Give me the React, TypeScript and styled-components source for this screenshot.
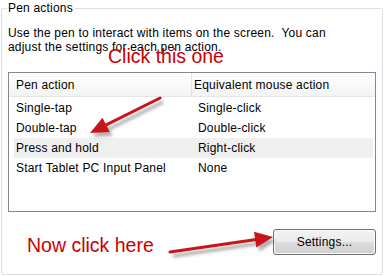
import React from 'react';
import styled, { createGlobalStyle } from 'styled-components';

const GlobalStyle = createGlobalStyle`
  body {
    margin: 0;
    background: #fff;
    font-family: "Liberation Sans", Arial, sans-serif;
  }
`;

const Page = styled.div`
  position: relative;
  width: 385px;
  height: 276px;
  padding: 8px 0 0 1px;
  box-sizing: border-box;
  letter-spacing: 0.2px;
`;

const GroupBox = styled.section`
  position: relative;
  width: 382px;
  height: 267px;
  box-sizing: border-box;
  border: 1px solid #d5dfe5;
  border-radius: 3px;
  padding: 17px 6px 0 6px;
  display: flex;
  flex-direction: column;
`;

const Legend = styled.div`
  position: absolute;
  top: -8px;
  left: 5px;
  padding: 0 2px 0 1px;
  background: #fff;
  font-size: 12px;
  line-height: 14px;
  color: #000;
`;

const Description = styled.p`
  margin: 0;
  font-size: 12px;
  line-height: 14px;
  color: #000;
  white-space: pre-wrap;
`;

const ListView = styled.div`
  margin-top: 18px;
  width: 368px;
  height: 140px;
  box-sizing: border-box;
  border: 1px solid #828790;
  background: #fff;
`;

const HeaderRow = styled.div`
  display: grid;
  grid-template-columns: 182px 1fr;
  height: 24px;
  box-sizing: border-box;
  border-bottom: 1px solid #e5e5e5;
  background: linear-gradient(#ffffff, #f3f4f6);
  margin-bottom: 1px;
`;

const HeaderCell = styled.div<{ $divider?: boolean }>`
  display: flex;
  align-items: center;
  padding-left: ${p => (p.$divider ? '2px' : '7px')};
  border-left: ${p => (p.$divider ? '1px solid #e0e3e8' : 'none')};
  font-size: 12px;
  color: #000;
`;

const Row = styled.div<{ $hot?: boolean }>`
  display: grid;
  grid-template-columns: 177px 1fr;
  height: 20px;
  margin: 0 2px 0 5px;
  background: ${p => (p.$hot ? '#efefef' : 'transparent')};
`;

const Cell = styled.div<{ $second?: boolean }>`
  display: flex;
  align-items: center;
  padding-left: ${p => (p.$second ? '7px' : '2px')};
  font-size: 12px;
  color: #000;
  white-space: nowrap;
`;

const Footer = styled.div`
  display: flex;
  justify-content: flex-end;
  padding: 17px 0 0 0;
`;

const Button = styled.button`
  width: 103px;
  height: 26px;
  border: 1px solid #707070;
  border-radius: 3px;
  background: linear-gradient(#f2f2f2 0%, #ebebeb 49%, #dddddd 50%, #cfcfcf 100%);
  box-shadow: inset 0 0 0 1px #fcfcfc;
  font-family: "Liberation Sans", Arial, sans-serif;
  font-size: 12px;
  letter-spacing: 0.2px;
  color: #000;
  padding: 0;
`;

const Callout = styled.div<{ $x: number; $y: number }>`
  position: absolute;
  left: ${p => p.$x}px;
  top: ${p => p.$y}px;
  font-family: "Liberation Sans", Arial, sans-serif;
  font-size: 19.5px;
  line-height: 22px;
  letter-spacing: 0;
  color: #cc0000;
  white-space: nowrap;
`;

const Overlay = styled.svg`
  position: absolute;
  left: 0;
  top: 0;
  pointer-events: none;
`;

const rows = [
  { pen: 'Single-tap', mouse: 'Single-click' },
  { pen: 'Double-tap', mouse: 'Double-click' },
  { pen: 'Press and hold', mouse: 'Right-click' },
  { pen: 'Start Tablet PC Input Panel', mouse: 'None' },
];

// arrow from tail to tip, drawn as shaft + triangular head
const Arrow: React.FC<{ x1: number; y1: number; x2: number; y2: number; head: number; half: number }> = ({
  x1, y1, x2, y2, head, half,
}) => {
  const dx = x2 - x1;
  const dy = y2 - y1;
  const len = Math.hypot(dx, dy);
  const ux = dx / len;
  const uy = dy / len;
  const bx = x2 - ux * head;
  const by = y2 - uy * head;
  const px = -uy;
  const py = ux;
  const pts = `${x2},${y2} ${bx + px * half},${by + py * half} ${bx - px * half},${by - py * half}`;
  return (
    <g>
      <g transform="translate(3 4)" opacity="0.45" filter="url(#blur)">
        <line x1={x1} y1={y1} x2={bx} y2={by} stroke="#555" strokeWidth={3.5} />
        <polygon points={pts} fill="#555" />
      </g>
      <line x1={x1} y1={y1} x2={bx + ux} y2={by + uy} stroke="#c8141a" strokeWidth={3} strokeLinecap="round" />
      <polygon points={pts} fill="#c8141a" />
    </g>
  );
};

export default function App() {
  return (
    <>
      <GlobalStyle />
      <Page>
        <GroupBox>
          <Legend>Pen actions</Legend>
          <Description>
            {'Use the pen to interact with items on the screen.  You can\nadjust the settings for each pen action.'}
          </Description>
          <ListView>
            <HeaderRow>
              <HeaderCell>Pen action</HeaderCell>
              <HeaderCell $divider>Equivalent mouse action</HeaderCell>
            </HeaderRow>
            {rows.map((r, i) => (
              <Row key={i} $hot={i === 2}>
                <Cell>{r.pen}</Cell>
                <Cell $second>{r.mouse}</Cell>
              </Row>
            ))}
          </ListView>
          <Footer>
            <Button>Settings...</Button>
          </Footer>
        </GroupBox>
        <Callout $x={108} $y={45}>Click this one</Callout>
        <Callout $x={27} $y={234}>Now click here</Callout>
        <Overlay width="385" height="276" viewBox="0 0 385 276">
          <defs>
            <filter id="blur" x="-20%" y="-50%" width="140%" height="200%">
              <feGaussianBlur stdDeviation="1.5" />
            </filter>
          </defs>
          <Arrow x1={160} y1={98} x2={90} y2={133} head={18} half={8} />
          <Arrow x1={170} y1={252} x2={273} y2={237} head={18} half={8} />
        </Overlay>
      </Page>
    </>
  );
}
